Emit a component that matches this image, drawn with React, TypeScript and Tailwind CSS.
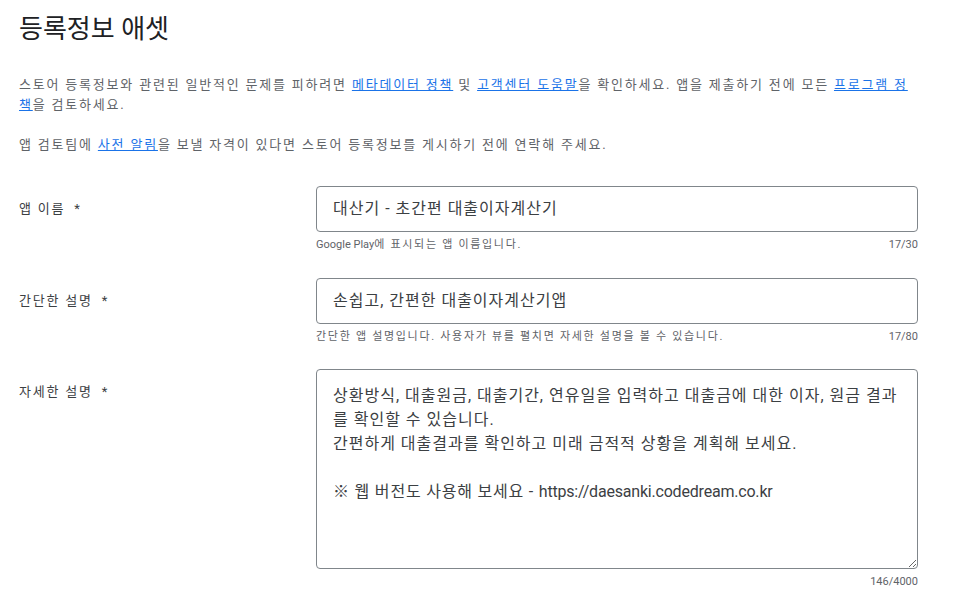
import React from 'react'

const font = { fontFamily: 'Roboto, "Noto Sans CJK KR", sans-serif' }

// latin runs in the reference render narrower than the hangul around them
function L({ children, className = '' }: { children: React.ReactNode; className?: string }) {
  return <span className={className}>{children}</span>
}

function Field({
  label,
  children,
  helper,
  count,
  multiline,
}: {
  label: string
  children: React.ReactNode
  helper?: React.ReactNode
  count: string
  multiline?: boolean
}) {
  return (
    <div className="grid grid-cols-[297px_602px]">
      <div className="pt-[13px] text-[13px] tracking-[1.8px] text-[#3c4043]">
        {label} <span className="ml-1">*</span>
      </div>
      <div>
        {multiline ? (
          <div className="h-[200px] w-full resize-y overflow-auto whitespace-pre-wrap rounded border border-[#80868b] py-[14px] pl-4 pr-[6px] text-[16px] leading-6 tracking-[1px] text-[#3c4043]">
            {children}
          </div>
        ) : (
          <div className="flex h-[46px] items-center rounded border border-[#80868b] px-4 text-[16px] tracking-[1px] text-[#3c4043]">
            {children}
          </div>
        )}
        <div className="mt-[5px] flex justify-between text-[11px] text-[#5f6368]">
          <span className="tracking-[1.7px]">{helper}</span>
          <span>{count}</span>
        </div>
      </div>
    </div>
  )
}

export default function App() {
  return (
    <div className="min-h-screen bg-white pl-[19px] pt-[11px]" style={font}>
      <h1 className="text-[26px] leading-9 text-[#202124]">등록정보 애셋</h1>

      <div className="mt-[28px] w-[900px] text-[13px] leading-5 tracking-[1.8px] text-[#5f6368]">
        <p>
          스토어 등록정보와 관련된 일반적인 문제를 피하려면{' '}
          <a className="text-[#1a73e8] underline">메타데이터 정책</a> 및{' '}
          <a className="text-[#1a73e8] underline">고객센터 도움말</a>을 확인하세요. 앱을 제출하기 전에 모든{' '}
          <a className="text-[#1a73e8] underline">프로그램 정책</a>을 검토하세요.
        </p>
        <p className="mt-5">
          앱 검토팀에 <a className="text-[#1a73e8] underline">사전 알림</a>을 보낼 자격이 있다면 스토어 등록정보를 게시하기 전에 연락해 주세요.
        </p>
      </div>

      <div className="mt-[31px] flex flex-col gap-[24px]">
        <Field
          label="앱 이름"
          helper={
            <>
              <L className="tracking-normal">Google Play</L>에 표시되는 앱 이름입니다.
            </>
          }
          count="17/30"
        >
          대산기 - 초간편 대출이자계산기
        </Field>
        <Field
          label="간단한 설명"
          helper="간단한 앱 설명입니다. 사용자가 뷰를 펼치면 자세한 설명을 볼 수 있습니다."
          count="17/80"
        >
          손쉽고, 간편한 대출이자계산기앱
        </Field>
        <Field label="자세한 설명" multiline count="146/4000">
          {'상환방식, 대출원금, 대출기간, 연유일을 입력하고 대출금에 대한 이자, 원금 결과를 확인할 수 있습니다.\n간편하게 대출결과를 확인하고 미래 금적적 상황을 계획해 보세요.\n\n'}
          <span className="tracking-[0.8px]">※ 웹 버전도 사용해 보세요 - </span>
          <L className="tracking-[-0.2px]">https://daesanki.codedream.co.kr</L>
        </Field>
      </div>
    </div>
  )
}
